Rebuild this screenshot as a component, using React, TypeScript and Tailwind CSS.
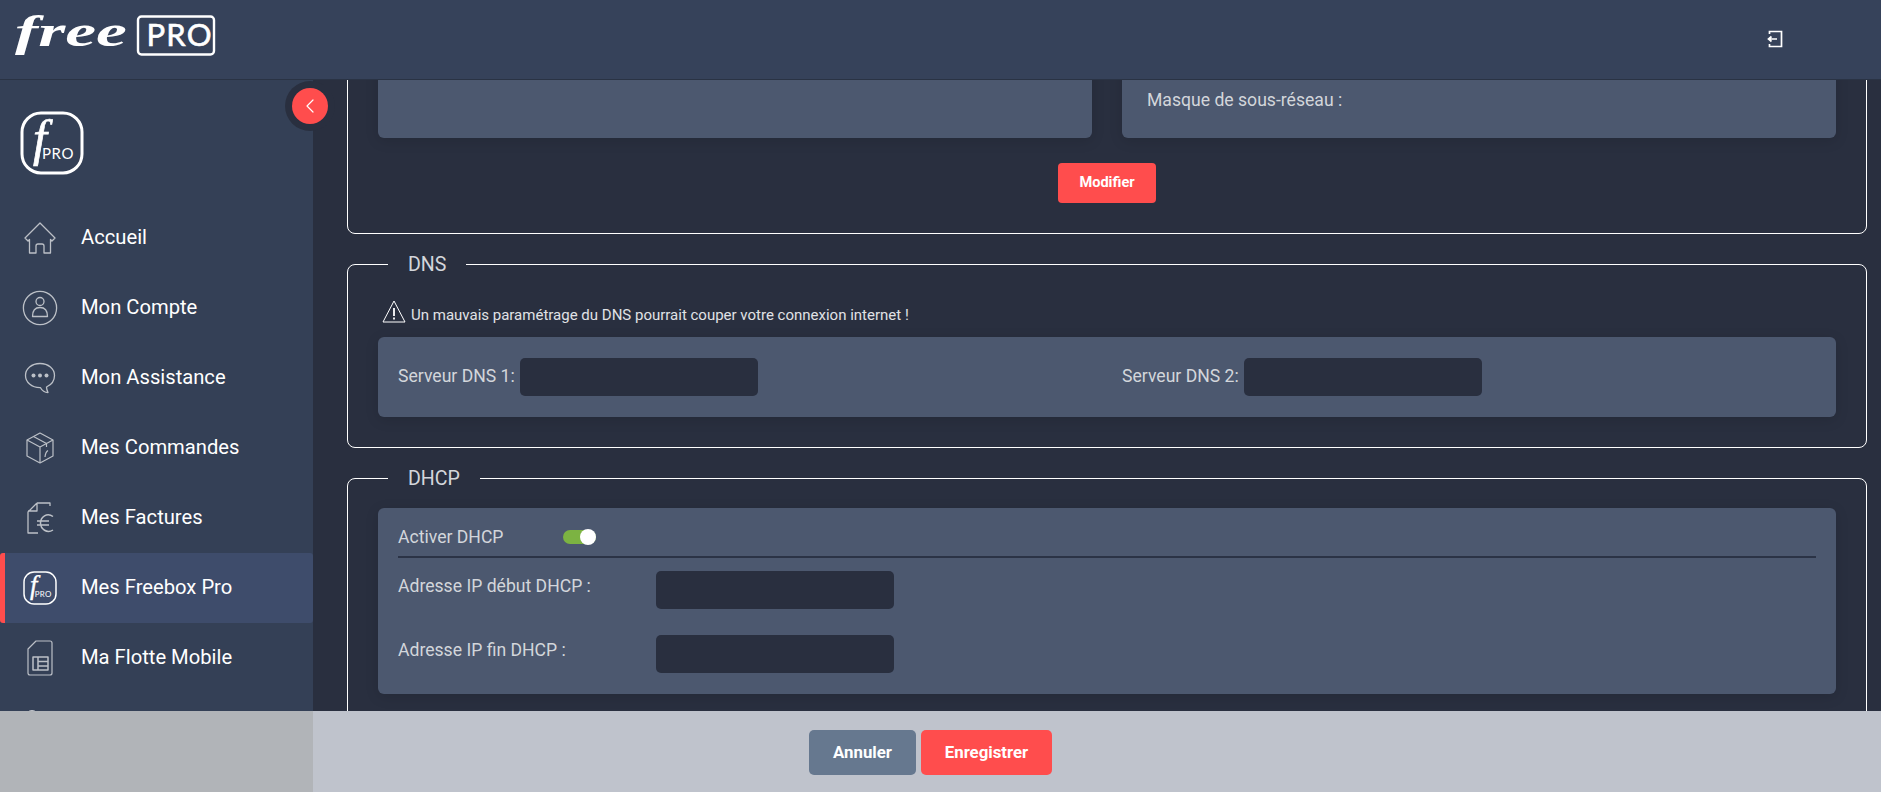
import { ChevronLeft } from "lucide-react";

const ICON = "fill-none stroke-[#bcc0c7]";

function FreeProMark({ size, stroke }: { size: number; stroke: number }) {
  return (
    <svg width={size} height={size} viewBox="0 0 64 64" className="shrink-0">
      <rect x={stroke / 2 + 0.5} y={stroke / 2 + 0.5} width={63 - stroke} height={63 - stroke} rx="19" fill="none" stroke="#fff" strokeWidth={stroke} />
      <text x="13" y="44" fontFamily="'Liberation Serif', serif" fontStyle="italic" fontSize="50" fill="#fff" stroke="#fff" strokeWidth="0.7">
        f
      </text>
      <text x="22" y="48" fontFamily="Lato, sans-serif" fontSize="15" letterSpacing="0.6" fill="#fff">
        PRO
      </text>
    </svg>
  );
}

function HomeIcon() {
  return (
    <svg width="34" height="34" viewBox="0 0 34 34" className={ICON} strokeWidth="1.3" strokeLinejoin="round">
      <path d="M17 2 L32 17 L29 20 L27.5 18.5 V32 H21 V25 Q21 23 19 23 H15 Q13 23 13 25 V32 H6.5 V18.5 L5 20 L2 17 Z" />
    </svg>
  );
}

function AccountIcon() {
  return (
    <svg width="36" height="36" viewBox="0 0 36 36" className={ICON} strokeWidth="1.3">
      <circle cx="18" cy="18" r="16.6" />
      <circle cx="18" cy="11.5" r="4" />
      <path d="M10.5 26.5 Q10.5 17.5 18 17.5 Q25.5 17.5 25.5 26.5 Z" strokeLinejoin="round" />
    </svg>
  );
}

function ChatIcon() {
  return (
    <svg width="32" height="32" viewBox="0 0 32 32" className={ICON} strokeWidth="1.3" strokeLinejoin="round">
      <path d="M16 1.5 C24.5 1.5 30.5 7 30.5 13.5 C30.5 19 27 23 22.5 25 C22.5 27 23 28.5 24 30.5 C21 30.5 18 28.5 16.5 25.7 L16 25.7 C7.5 25.7 1.5 20 1.5 13.5 C1.5 7 7.5 1.5 16 1.5 Z" />
      <circle cx="9.5" cy="13.5" r="2" className="fill-[#bcc0c7] stroke-none" />
      <circle cx="16" cy="13.5" r="2" className="fill-[#bcc0c7] stroke-none" />
      <circle cx="22.5" cy="13.5" r="2" className="fill-[#bcc0c7] stroke-none" />
    </svg>
  );
}

function BoxIcon() {
  return (
    <svg width="28" height="32" viewBox="0 0 28 32" className={ICON} strokeWidth="1.2" strokeLinejoin="round">
      <path d="M14 1 L27 8 V24 L14 31 L1 24 V8 Z" />
      <path d="M1 8 L14 15 L27 8 M14 15 V31 M7.5 4.5 L20.5 11.5 V15" />
      <path d="M19 25 Q19.5 20 22 18.5" />
    </svg>
  );
}

function InvoiceIcon() {
  return (
    <svg width="28" height="34" viewBox="0 0 28 34" className={ICON} strokeWidth="1.3" strokeLinejoin="round">
      <path d="M11 2 H24 V5 M11 2 L2 11 V32 H12 M11 2 V10 H2" />
      <path d="M27 15.5 C21 11 14.5 16 14.5 22 C14.5 28 21 33 27 29 M11 20 H23 M11 24 H23" strokeWidth="1.5" />
    </svg>
  );
}

function SimIcon() {
  return (
    <svg width="26" height="36" viewBox="0 0 26 36" className={ICON} strokeWidth="1.2" strokeLinejoin="round">
      <path d="M9 1 H23 Q25 1 25 3 V33 Q25 35 23 35 H3 Q1 35 1 33 V9 Z" />
      <path d="M6 17 H21 V30 H6 Z M11 17 V30 M11 21.5 H21 M11 26 H21" strokeWidth="1.5" />
    </svg>
  );
}

// only the top of this one shows above the save bar
function NextIcon() {
  return (
    <svg width="36" height="36" viewBox="0 0 36 36" className="fill-[#c4c7cd]">
      <ellipse cx="10" cy="2" rx="3.5" ry="2" />
      <ellipse cx="22" cy="2.5" rx="5" ry="1.5" />
    </svg>
  );
}

const items = [
  { label: "Accueil", icon: <HomeIcon /> },
  { label: "Mon Compte", icon: <AccountIcon /> },
  { label: "Mon Assistance", icon: <ChatIcon /> },
  { label: "Mes Commandes", icon: <BoxIcon /> },
  { label: "Mes Factures", icon: <InvoiceIcon /> },
  { label: "Mes Freebox Pro", icon: <FreeProMark size={34} stroke={2.8} />, active: true },
  { label: "Ma Flotte Mobile", icon: <SimIcon /> },
  { label: "", icon: <NextIcon /> },
];

function Field({ className = "w-[238px]" }: { className?: string }) {
  return <div className={`h-[38px] rounded-[5px] bg-[#292f3f] ${className}`} />;
}

function Panel({ className = "", children }: { className?: string; children?: React.ReactNode }) {
  return <div className={`rounded-[6px] bg-[#4c586f] shadow-[0_3px_14px_rgba(0,0,0,0.12)] ${className}`}>{children}</div>;
}

function Legend({ children }: { children: React.ReactNode }) {
  return <legend className="ml-[10px] px-[20px] text-[19.6px] leading-[23px] text-[#d3d6db]">{children}</legend>;
}

export default function App() {
  return (
    <div className="relative flex h-screen flex-col overflow-hidden bg-[#292f3f] font-['Roboto',sans-serif] text-[17.6px] text-[#d3d6db]">
      {/* Header */}
      <header className="relative z-10 flex h-[80px] shrink-0 items-start border-b border-[#2a3344] bg-[#36425a]">
        <svg width="230" height="70" viewBox="0 0 230 70" className="shrink-0">
          <text x="15" y="46" fontFamily="'Liberation Serif', serif" fontStyle="italic" fontWeight="700" fontSize="45" textLength="112" lengthAdjust="spacingAndGlyphs" fill="#fff">
            free
          </text>
          <rect x="138" y="16.5" width="76" height="38" rx="3.5" fill="none" stroke="#fff" strokeWidth="2.4" />
          <text x="146.5" y="46" fontFamily="Lato, sans-serif" fontSize="31" letterSpacing="1.2" fill="#fff" stroke="#fff" strokeWidth="0.6">
            PRO
          </text>
        </svg>
        <svg width="18" height="18" viewBox="0 0 18 18" className="ml-[1536px] mt-[30px] fill-none stroke-white" strokeWidth="1.7">
          <path d="M3.5 4 V1.5 H15.5 V16.5 H3.5 V14" />
          <path d="M11 9 H2.5 M5.5 6.5 L2.5 9 L5.5 11.5" />
        </svg>
      </header>

      <div className="flex min-h-0 flex-1">
        {/* Sidebar */}
        <aside className="relative flex w-[313px] shrink-0 flex-col bg-[#344056] text-[20.2px] text-white">
          <div className="pl-[20px] pt-[31px] pb-[28px]">
            <FreeProMark size={64} stroke={3} />
          </div>
          {items.map((item) => (
            <div
              key={item.label}
              className={`flex h-[70px] shrink-0 items-center rounded-[3px] ${
                item.active ? "border-l-[5px] border-[#ff4d4d] bg-[#3e4c6b]" : "border-l-[5px] border-transparent"
              }`}
            >
              <span className="flex w-[70px] shrink-0 justify-center">{item.icon}</span>
              <span className="ml-[6px] -mt-[2px]">{item.label}</span>
            </div>
          ))}
          <div className="absolute -right-[22px] top-[1px] flex h-[50px] w-[50px] items-center justify-center rounded-full bg-[#292f3f]">
            <div className="flex h-[36px] w-[36px] items-center justify-center rounded-full bg-[#ff4d4d] text-white">
              <ChevronLeft size={24} strokeWidth={1.2} />
            </div>
          </div>
        </aside>

        {/* Content */}
        <main className="min-w-0 flex-1 overflow-hidden">
          <div className="ml-[34px] mr-[14px] -mt-[61px] flex flex-col">
            <fieldset className="rounded-[8px] border border-white px-[30px] pt-[40px] pb-[30px]">
              <div className="grid grid-cols-2 gap-[30px]">
                <Panel className="h-[78px]" />
                <Panel className="h-[78px] pl-[25px] pt-[27px]">Masque de sous-réseau :</Panel>
              </div>
              <div className="mt-[25px] flex justify-center">
                <button className="h-[40px] w-[98px] rounded-[4px] bg-[#ff4d4d] text-[14.6px] font-bold text-white">Modifier</button>
              </div>
            </fieldset>

            <fieldset className="mt-[19px] rounded-[8px] border border-white px-[30px] pb-[30px]">
              <Legend>DNS</Legend>
              <div className="mt-[23px] flex h-[38px] items-center pb-[6px] pl-[4px] text-[15px] text-[#e0e2e6]">
                <svg width="24" height="23" viewBox="0 0 24 23" className="mr-[5px] -mt-[8px] shrink-0 fill-none stroke-white" strokeWidth="1" strokeLinejoin="round">
                  <path d="M12 1 L23 22 H1 Z" />
                  <path d="M12 8 V16 M12 17.5 V19.5" strokeWidth="1.8" />
                </svg>
                Un mauvais paramétrage du DNS pourrait couper votre connexion internet !
              </div>
              <Panel className="grid h-[80px] grid-cols-[724px_1fr] items-center pb-[1px] pl-[20px]">
                <div className="flex items-center gap-[5px]">
                  Serveur DNS 1:
                  <Field />
                </div>
                <div className="flex items-center gap-[5px]">
                  Serveur DNS 2:
                  <Field />
                </div>
              </Panel>
            </fieldset>

            <fieldset className="mt-[19px] h-[300px] rounded-[8px] border border-white px-[30px]">
              <Legend>DHCP</Legend>
              <Panel className="mt-[18px] h-[186px] px-[20px]">
                <div className="flex h-[50px] items-center border-b-2 border-[#2b3346] pt-[10px]">
                  <span className="w-[165px]">Activer DHCP</span>
                  <span className="relative h-[14px] w-[33px] rounded-full bg-[#7cb342]">
                    <span className="absolute right-0 -top-[1px] h-[16px] w-[16px] rounded-full bg-white" />
                  </span>
                </div>
                <div className="mt-[13px] flex items-start">
                  <span className="w-[258px] leading-[30px]">Adresse IP début DHCP :</span>
                  <Field />
                </div>
                <div className="mt-[26px] flex items-start">
                  <span className="w-[258px] leading-[30px]">Adresse IP fin DHCP :</span>
                  <Field />
                </div>
              </Panel>
            </fieldset>
          </div>
        </main>
      </div>

      {/* Save bar */}
      <div className="absolute inset-x-0 bottom-0 z-20 flex h-[81px]">
        <div className="w-[313px] bg-[#b1b4b8]" />
        <div className="flex flex-1 items-start gap-[5px] bg-[#bfc3cc] pl-[496px] pt-[19px]">
          <button className="h-[45px] w-[107px] rounded-[5px] bg-[#66788f] text-[16.8px] font-bold text-white">Annuler</button>
          <button className="h-[45px] w-[131px] rounded-[5px] bg-[#ff4d4d] text-[16.8px] font-bold text-white">Enregistrer</button>
        </div>
      </div>
    </div>
  );
}
